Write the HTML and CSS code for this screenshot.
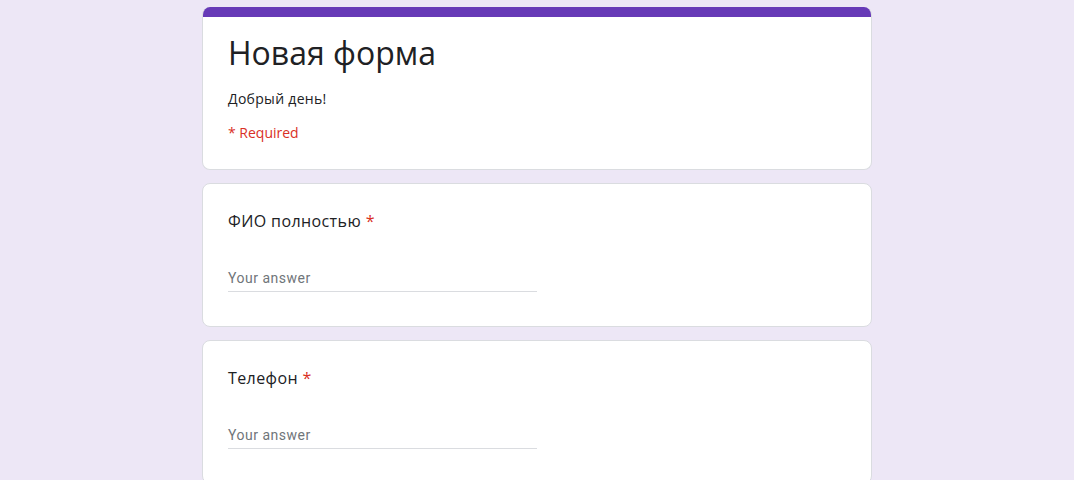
FILE: index.html
```html
<!DOCTYPE html>
<html lang="ru">
<head>
<meta charset="utf-8">
<title>Новая форма</title>
<link rel="stylesheet" href="styles.css">
</head>
<body>
<main class="page">
  <section class="card header-card">
    <div class="accent"></div>
    <div class="header-body">
      <h1 class="title">Новая форма</h1>
      <p class="desc">Добрый день!</p>
      <p class="required-note">* Required</p>
    </div>
  </section>
  <section class="card question">
    <div class="label">ФИО полностью <span class="star">*</span></div>
    <div class="answer">Your answer</div>
  </section>
  <section class="card question">
    <div class="label">Телефон <span class="star">*</span></div>
    <div class="answer">Your answer</div>
  </section>
</main>
</body>
</html>
```

FILE: styles.css
```css
html, body {
  margin: 0;
  padding: 0;
}
body {
  background: #ede7f6;
  font-family: "Open Sans", Roboto, "Liberation Sans", sans-serif;
  color: #202124;
}
.page {
  width: 670px;
  margin: 7px auto 0;
  display: flex;
  flex-direction: column;
  gap: 13px;
}
.card {
  background: #fff;
  border: 1px solid #dadce0;
  border-radius: 8px;
  box-sizing: border-box;
}
.header-card {
  border-top: none;
  overflow: hidden;
}
.accent {
  height: 10px;
  background: #673ab7;
}
.header-body {
  padding: 16px 25px 26px;
}
.title {
  margin: 0;
  font-weight: 400;
  font-size: 32px;
  line-height: 40px;
  color: #202124;
}
.desc {
  margin: 16px 0 0;
  font-size: 14px;
  line-height: 20px;
  letter-spacing: 0.3px;
}
.required-note {
  margin: 14px 0 0;
  font-size: 14px;
  line-height: 20px;
  color: #d93025;
}
.question {
  padding: 25px 25px 34px;
}
.label {
  font-size: 16px;
  line-height: 24px;
  color: #202124;
  letter-spacing: 0.4px;
}
.star {
  color: #d93025;
}
.answer {
  margin-top: 35px;
  width: 309px;
  font-family: Roboto, "Liberation Sans", sans-serif;
  font-size: 14px;
  line-height: 20px;
  color: #70757a;
  padding-bottom: 3px;
  border-bottom: 1px solid #dadce0;
  letter-spacing: 0.5px;
}
```
